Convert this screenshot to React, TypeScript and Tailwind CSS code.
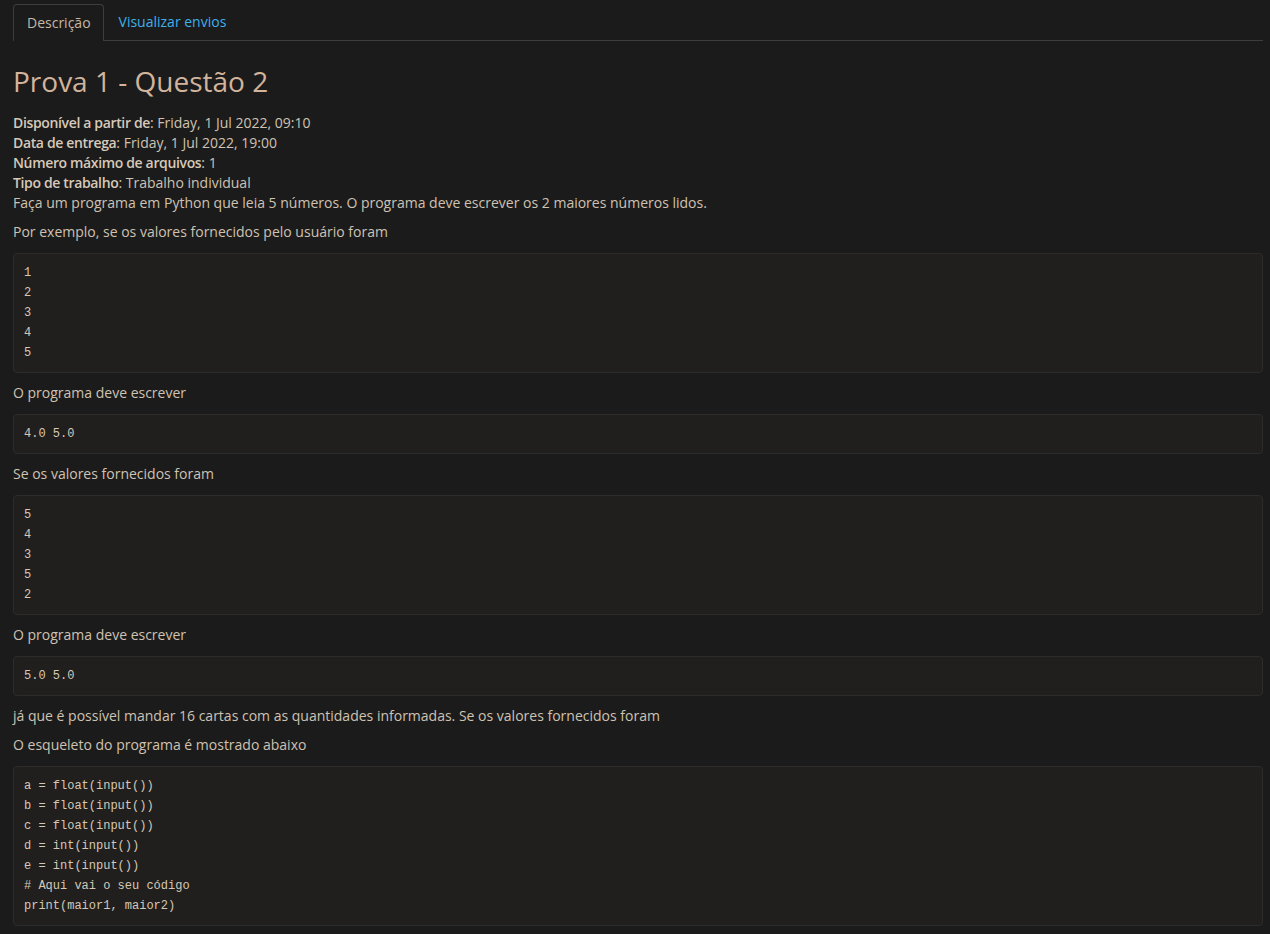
import React from "react";

const Code = ({ lines }: { lines: string[] }) => (
  <pre className="mb-[10px] mt-[11px] rounded-[4px] border border-[#2e2c2a] bg-[#201f1e] px-[10px] py-[9px] text-[12px] leading-[20px] text-[#d6c8b6] [font-family:'Liberation_Mono',monospace]">
    {lines.join("\n")}
  </pre>
);

const B = ({ children }: { children: React.ReactNode }) => (
  <b className="font-semibold tracking-[-0.35px] text-[#d6c9b9]">{children}</b>
);

export default function App() {
  return (
    <div className="min-h-[934px] bg-[#1b1b1b] pl-[13px] pr-[7px] pt-[4px] pb-[10px] text-[14px] leading-[20px] text-[#cfc2b2] [font-family:'Open_Sans',sans-serif]">
      <div className="flex border-b border-[#3d3d3d]">
        <div className="-mb-px rounded-t-[4px] border border-b-0 border-[#3d3d3d] bg-[#1b1b1b] pl-[13px] pr-[12px] py-[8px] text-[#c6b7a6]">
          Descrição
        </div>
        <div className="px-[15px] py-[8px] text-[#3fb0ea]">Visualizar envios</div>
      </div>
      <h2 className="mt-[22px] mb-[14px] text-[28px] font-medium leading-[36px] text-[#d2b49c]">Prova 1 - Questão 2</h2>
      <div>
        <div><B>Disponível a partir de</B>: Friday, 1 Jul 2022, 09:10</div>
        <div><B>Data de entrega</B>: Friday, 1 Jul 2022, 19:00</div>
        <div><B>Número máximo de arquivos</B>: 1</div>
        <div><B>Tipo de trabalho</B>: Trabalho individual</div>
      </div>
      <p className="mb-[9px]">Faça um programa em Python que leia 5 números. O programa deve escrever os 2 maiores números lidos.</p>
      <p>Por exemplo, se os valores fornecidos pelo usuário foram</p>
      <Code lines={["1", "2", "3", "4", "5"]} />
      <p>O programa deve escrever</p>
      <Code lines={["4.0 5.0"]} />
      <p>Se os valores fornecidos foram</p>
      <Code lines={["5", "4", "3", "5", "2"]} />
      <p>O programa deve escrever</p>
      <Code lines={["5.0 5.0"]} />
      <p className="mb-[9px]">já que é possível mandar 16 cartas com as quantidades informadas. Se os valores fornecidos foram</p>
      <p>O esqueleto do programa é mostrado abaixo</p>
      <Code
        lines={[
          "a = float(input())",
          "b = float(input())",
          "c = float(input())",
          "d = int(input())",
          "e = int(input())",
          "# Aqui vai o seu código",
          "print(maior1, maior2)",
        ]}
      />
    </div>
  );
}
